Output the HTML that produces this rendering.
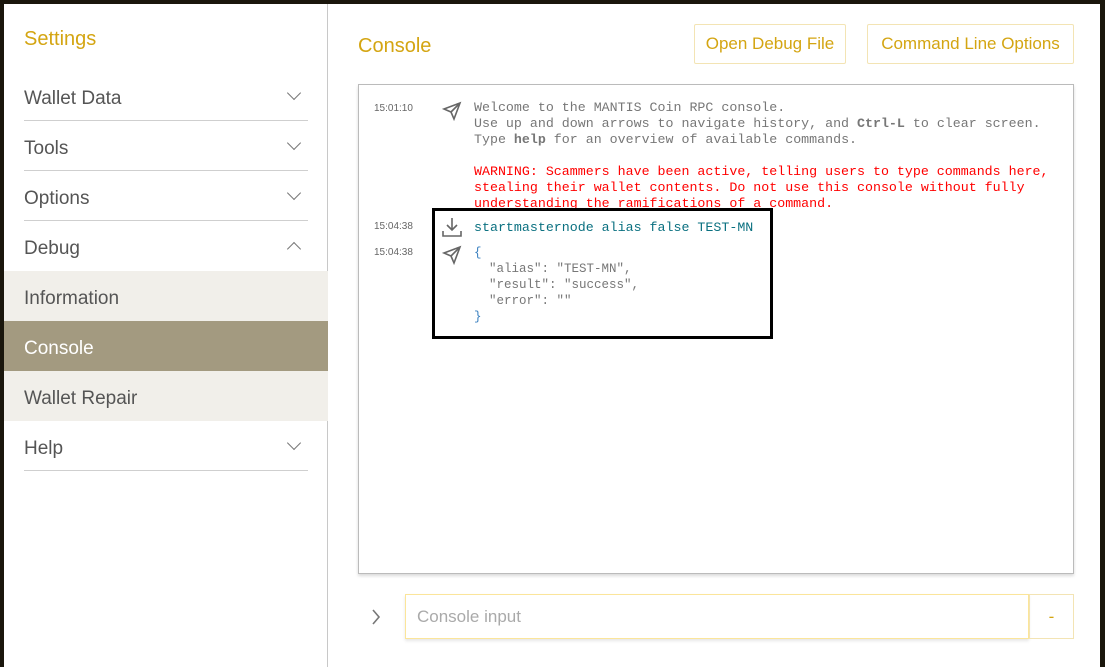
<!DOCTYPE html>
<html><head><meta charset="utf-8"><style>
*{margin:0;padding:0;box-sizing:border-box}
body{width:1105px;height:667px;background:#1a160c;position:relative;overflow:hidden;font-family:"Liberation Sans",sans-serif}
#win{position:absolute;left:4px;top:4px;width:1096px;height:663px;background:#fff}
#side{position:absolute;left:0;top:0;width:324px;height:663px;border-right:1px solid #c8c8c8}
.h{position:absolute;left:20px;top:24px;font-size:20px;color:#d4a512}
.it{position:absolute;left:0;width:324px;height:50px;font-size:19px;color:#555;line-height:50px;padding-left:20px}
.it.sep::after{content:"";position:absolute;left:20px;right:20px;bottom:0;border-bottom:1px solid #cfcfcf}
.chev{position:absolute;right:29px;top:17px;width:10px;height:10px;border-right:1.5px solid #777;border-bottom:1.5px solid #777;transform:rotate(45deg)}
.chev.up{top:23px;transform:rotate(-135deg)}
.title{position:absolute;left:354px;top:31px;font-size:20px;color:#d4a512}
.btn{position:absolute;top:20px;height:40px;border:1px solid #f3e4b4;border-radius:2px;color:#d4a512;font-size:17px;line-height:38px;text-align:center}
#con{position:absolute;left:358px;top:84px;width:716px;height:490px;border:1px solid #bbb;box-shadow:0 2px 3px rgba(0,0,0,.15)}
.ts{position:absolute;left:15px;font-size:10px;color:#666}
.m{position:absolute;left:115px;font-family:"Liberation Mono",monospace;font-size:13.3px;line-height:16px;color:#777;white-space:pre}
.red{color:#f00}.teal{color:#0a7080}.blue{color:#3a80c0}
#box{position:absolute;left:432px;top:208px;width:341px;height:131px;border:3px solid #000}
#inp{position:absolute;left:405px;top:594px;width:624px;height:45px;border:1px solid #fbe59a;font-size:17px;color:#aaa;line-height:43px;padding-left:11px;box-shadow:0 2px 3px rgba(0,0,0,.1)}
#dash{position:absolute;left:1029px;top:594px;width:45px;height:45px;border:1px solid #f3e4b4;color:#d4a512;text-align:center;line-height:43px;font-size:17px}
</style></head><body>
<div id="win">
<div id="side">
<div class="h">Settings</div>
<div class="it sep" style="top:67px;line-height:56px">Wallet Data<span class="chev"></span></div>
<div class="it sep" style="top:117px;line-height:56px">Tools<span class="chev"></span></div>
<div class="it sep" style="top:167px;line-height:56px">Options<span class="chev"></span></div>
<div class="it" style="top:217px;line-height:56px">Debug<span class="chev up"></span></div>
<div class="it" style="top:267px;background:#f1efea;line-height:56px">Information</div>
<div class="it" style="top:317px;background:#a39a80;color:#fff;line-height:56px">Console</div>
<div class="it" style="top:367px;background:#f1efea;line-height:56px">Wallet Repair</div>
<div class="it sep" style="top:417px;line-height:56px">Help<span class="chev"></span></div>
</div>
<div class="title">Console</div>
<div class="btn" style="left:690px;width:152px">Open Debug File</div>
<div class="btn" style="left:863px;width:207px">Command Line Options</div>
</div>
<div id="con">
<div class="ts" style="top:18px">15:01:10</div>
<svg style="position:absolute;left:83px;top:16px" width="20" height="20" viewBox="0 0 20 20" fill="none" stroke="#666" stroke-width="1.6"><path d="M18 2L2 8l7 3 3 7z M18 2L9 11"/></svg>
<div class="m" style="top:15px">Welcome to the MANTIS Coin RPC console.
Use up and down arrows to navigate history, and <b>Ctrl-L</b> to clear screen.
Type <b>help</b> for an overview of available commands.

<span class="red">WARNING: Scammers have been active, telling users to type commands here,
stealing their wallet contents. Do not use this console without fully
understanding the ramifications of a command.</span></div>
<div class="ts" style="top:136px">15:04:38</div>
<svg style="position:absolute;left:82px;top:131px" width="22" height="22" viewBox="0 0 22 22" fill="none" stroke="#666" stroke-width="1.6"><path d="M11 2v12M6 9l5 5 5-5M2 15v5h18v-5"/></svg>
<div class="m teal" style="top:135px">startmasternode alias false TEST-MN</div>
<div class="ts" style="top:162px">15:04:38</div>
<svg style="position:absolute;left:83px;top:160px" width="20" height="20" viewBox="0 0 20 20" fill="none" stroke="#666" stroke-width="1.6"><path d="M18 2L2 8l7 3 3 7z M18 2L9 11"/></svg>
<div class="m" style="top:160px;font-size:12.5px"><span class="blue">{</span>
  "alias": "TEST-MN",
  "result": "success",
  "error": ""
<span class="blue">}</span></div>
</div>
<div id="box"></div>
<svg style="position:absolute;left:371px;top:609px" width="10" height="16" viewBox="0 0 10 16" fill="none" stroke="#777" stroke-width="1.6"><path d="M2 1l6 7-6 7"/></svg>
<div id="inp">Console input</div>
<div id="dash">-</div>
</body></html>
